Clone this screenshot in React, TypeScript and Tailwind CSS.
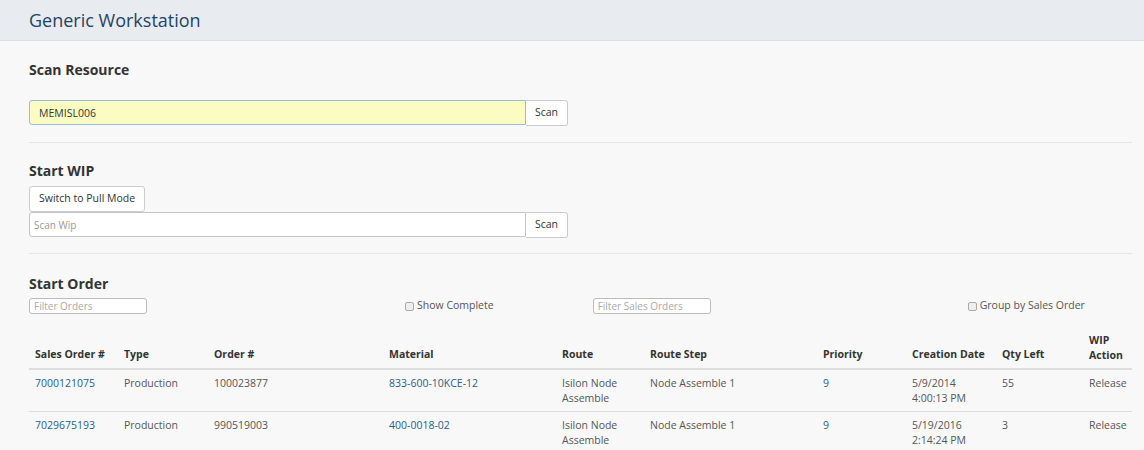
const rows = [
  {
    so: "7000121075",
    type: "Production",
    order: "100023877",
    material: "833-600-10KCE-12",
    route: "Isilon Node Assemble",
    step: "Node Assemble 1",
    priority: "9",
    date: ["5/9/2014", "4:00:13 PM"],
    qty: "55",
  },
  {
    so: "7029675193",
    type: "Production",
    order: "990519003",
    material: "400-0018-02",
    route: "Isilon Node Assemble",
    step: "Node Assemble 1",
    priority: "9",
    date: ["5/19/2016", "2:14:24 PM"],
    qty: "3",
  },
];

function ScanRow({ value, placeholder, yellow }: { value?: string; placeholder?: string; yellow?: boolean }) {
  return (
    <div className="flex w-[539px]">
      <input
        type="text"
        defaultValue={value}
        placeholder={placeholder}
        className={
          yellow
            ? "h-[25px] w-[497px] rounded-l-[3px] border border-[#9dbbd9] bg-[#fafcc2] px-[9px] text-[10.5px] text-[#333] outline-none"
            : "h-[25px] w-[497px] rounded-l-[3px] border border-[#c4c4c4] bg-white px-[4px] text-[10px] text-[#555] outline-none placeholder:text-[#999]"
        }
      />
      <button className="h-[26px] w-[42px] rounded-r-[3px] border border-l-0 border-[#ccc] bg-white text-[10.5px] text-[#333]">
        Scan
      </button>
    </div>
  );
}

export default function App() {
  return (
    <div className="min-h-[450px] bg-[#f8f8f8] font-['Open_Sans',sans-serif] text-[10.5px] text-[#555]">
      <header className="flex h-[41px] items-center border-b border-[#d9dde5] bg-[#e8ebf0] px-[29px]">
        <h1 className="text-[18px] font-normal text-[#1f4466]">Generic Workstation</h1>
      </header>

      <div className="pl-[29px] pr-[12px]">
        <section className="border-b border-[#e5e5e5] pt-[18px] pb-[16px]">
          <h2 className="mb-[20px] text-[14px] font-bold text-[#333]">Scan Resource</h2>
          <ScanRow value="MEMISL006" yellow />
        </section>

        <section className="border-b border-[#e5e5e5] pt-[17px] pb-[15px]">
          <h2 className="mb-[5px] text-[14px] font-bold text-[#333]">Start WIP</h2>
          <button className="h-[26px] rounded-[3px] border border-[#ccc] bg-white px-[9px] text-[10.5px] text-[#333]">
            Switch to Pull Mode
          </button>
          <ScanRow placeholder="Scan Wip" />
        </section>

        <section className="pt-[19px]">
          <h2 className="mb-[3px] text-[14px] font-bold text-[#333]">Start Order</h2>
          <div className="flex h-[18px] items-center">
            <input
              placeholder="Filter Orders"
              className="h-[16px] w-[118px] rounded-[3px] border border-[#bbb] bg-white px-[4px] text-[10px] outline-none placeholder:text-[#aaa]"
            />
            <label className="ml-[258px] flex items-center gap-[3px] text-[10.5px] text-[#555]">
              <span className="inline-block h-[9px] w-[9px] rounded-[2px] border border-[#aaa] bg-[#eee]" />
              Show Complete
            </label>
            <input
              placeholder="Filter Sales Orders"
              className="ml-[99px] h-[16px] w-[118px] rounded-[3px] border border-[#bbb] bg-white px-[4px] text-[10px] outline-none placeholder:text-[#aaa]"
            />
            <label className="ml-[257px] flex items-center gap-[3px] text-[10.5px] text-[#555]">
              <span className="inline-block h-[9px] w-[9px] rounded-[2px] border border-[#aaa] bg-[#eee]" />
              Group by Sales Order
            </label>
          </div>

          <table className="mt-[13px] w-[1103px] border-collapse text-left text-[10.5px]">
            <thead>
              <tr className="border-b-2 border-[#ddd] align-bottom font-bold text-[#333]">
                <th className="w-[89px] py-[5px] pl-[6px] font-bold">Sales Order #</th>
                <th className="w-[90px] py-[5px] pl-[6px] font-bold">Type</th>
                <th className="w-[175px] py-[5px] pl-[6px] font-bold">Order #</th>
                <th className="w-[173px] py-[5px] pl-[6px] font-bold">Material</th>
                <th className="w-[88px] py-[5px] pl-[6px] font-bold">Route</th>
                <th className="w-[173px] py-[5px] pl-[6px] font-bold">Route Step</th>
                <th className="w-[89px] py-[5px] pl-[6px] font-bold">Priority</th>
                <th className="w-[90px] py-[5px] pl-[6px] font-bold">Creation Date</th>
                <th className="w-[87px] py-[5px] pl-[6px] font-bold">Qty Left</th>
                <th className="py-[5px] pl-[6px] leading-[15px] font-bold">
                  WIP
                  <br />
                  Action
                </th>
              </tr>
            </thead>
            <tbody>
              {rows.map((r) => (
                <tr key={r.so} className="border-b border-[#ddd] align-top leading-[15px]">
                  <td className="pt-[6px] pb-[5px] pl-[6px] text-[#2a5d8f]">{r.so}</td>
                  <td className="pt-[6px] pb-[5px] pl-[6px]">{r.type}</td>
                  <td className="pt-[6px] pb-[5px] pl-[6px]">{r.order}</td>
                  <td className="pt-[6px] pb-[5px] pl-[6px] text-[#2a5d8f]">{r.material}</td>
                  <td className="pt-[6px] pb-[5px] pl-[6px] pr-[10px]">{r.route}</td>
                  <td className="pt-[6px] pb-[5px] pl-[6px]">{r.step}</td>
                  <td className="pt-[6px] pb-[5px] pl-[6px] text-[#2a5d8f]">{r.priority}</td>
                  <td className="pt-[6px] pb-[5px] pl-[6px]">
                    {r.date[0]}
                    <br />
                    {r.date[1]}
                  </td>
                  <td className="pt-[6px] pb-[5px] pl-[6px]">{r.qty}</td>
                  <td className="pt-[6px] pb-[5px] pl-[6px]">Release</td>
                </tr>
              ))}
            </tbody>
          </table>
        </section>
      </div>
    </div>
  );
}
